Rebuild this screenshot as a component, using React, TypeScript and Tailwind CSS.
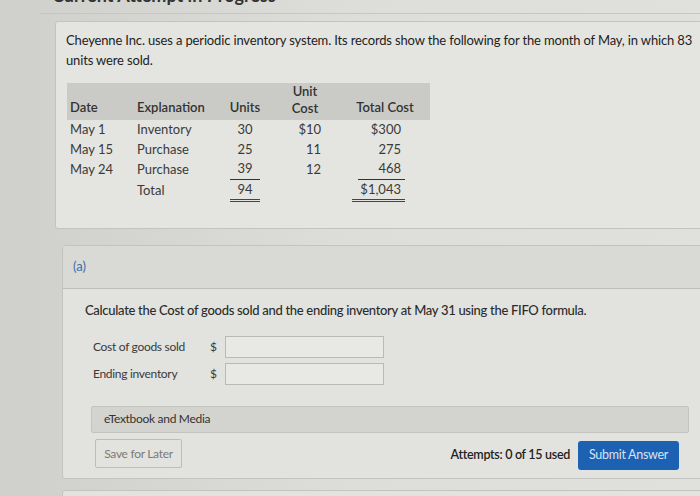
import React from 'react';

const rows = [
  { date: 'May 1', exp: 'Inventory', units: '30', cost: '$10', total: '$300' },
  { date: 'May 15', exp: 'Purchase', units: '25', cost: '11', total: '275' },
  { date: 'May 24', exp: 'Purchase', units: '39', cost: '12', total: '468' },
];

export default function App() {
  return (
    <div className="w-[700px] h-[496px] overflow-hidden bg-gradient-to-r from-[#cfd0cb] via-[#dddeda] to-[#e0e1dc] font-['Lato','Liberation_Sans',sans-serif] text-[#2b2b2b]">
      {/* cut-off page title */}
      <div className="ml-[40px] h-[14px] border-b border-[#c6c7c2] overflow-hidden relative">
        <div className="absolute left-[12px] top-[-18px] text-[18px] font-bold text-[#333]">Current Attempt in Progress</div>
      </div>

      {/* question box */}
      <div className="ml-[55px] mt-[7px] w-[700px] h-[208px] border border-[#c3c4bf] rounded-[3px] bg-[#e4e5e0] pl-[10px] pt-[8px]">
        <p className="text-[13px] leading-[20px] tracking-[-0.15px] w-[632px] text-[#222]">
          Cheyenne Inc. uses a periodic inventory system. Its records show the following for the month of May, in which 83 units were sold.
        </p>
        <table className="mt-[13px] ml-[1px] w-[363px] text-[13px] border-collapse">
          <thead>
            <tr className="bg-[#cacbc6] align-bottom font-semibold text-[#333]">
              <th className="w-[63px] text-left pl-[3px] pb-[3px] pt-[3px] font-semibold">Date</th>
              <th className="w-[90px] text-left pl-[7px] pb-[3px] font-semibold">Explanation</th>
              <th className="w-[50px] text-center pb-[3px] font-semibold">Units</th>
              <th className="w-[70px] text-center pb-[3px] font-semibold leading-[17px]">
                Unit
                <br />
                Cost
              </th>
              <th className="w-[90px] text-center pb-[3px] font-semibold">Total Cost</th>
            </tr>
          </thead>
          <tbody className="text-[#3a3a3a]">
            {rows.map((r, i) => (
              <tr key={r.date} className="h-[19.5px]">
                <td className="pl-[3px]">{r.date}</td>
                <td className="pl-[7px]">{r.exp}</td>
                <td className="text-center">
                  <span className={`inline-block px-[7px] ${i === 2 ? 'border-b-[1.5px] border-[#333]' : ''}`}>{r.units}</span>
                </td>
                <td className="text-right pr-[19px]">{r.cost}</td>
                <td className="text-right pr-[25px]">
                  <span className={`inline-block ${i === 2 ? 'border-b-[1.5px] border-[#333] pl-[20px] pr-[4px]' : 'pr-[4px]'}`}>{r.total}</span>
                </td>
              </tr>
            ))}
            <tr className="h-[20px]">
              <td />
              <td className="pl-[7px]">Total</td>
              <td className="text-center">
                <span className="inline-block px-[7px] border-b-[3px] border-double border-[#444]">94</span>
              </td>
              <td />
              <td className="text-right pr-[25px]">
                <span className="inline-block pl-[8px] pr-[4px] border-b-[3px] border-double border-[#444]">$1,043</span>
              </td>
            </tr>
          </tbody>
        </table>
      </div>

      {/* part (a) */}
      <div className="ml-[62px] mt-[16px] w-[700px] h-[234px] border border-[#c3c4bf] rounded-[3px] bg-[#e2e3de]">
        <div className="h-[43px] bg-[#d9dad5] border-b border-[#bfc0bb] flex items-center pl-[10px]">
          <span className="text-[13px] text-[#3b6fae]">(a)</span>
        </div>
        <div className="pl-[22px] pt-[12px]">
          <p className="text-[13px] tracking-[-0.3px] font-medium text-[#2b2b2b]">
            Calculate the Cost of goods sold and the ending inventory at May 31 using the FIFO formula.
          </p>
          <div className="mt-[15px] ml-[8px] flex flex-col gap-[5px] text-[12px] text-[#3a3a3a] tracking-[-0.3px]">
            <div className="flex items-center">
              <span className="w-[117px]">Cost of goods sold</span>
              <span className="w-[15px] text-[12px]">$</span>
              <div className="w-[159px] h-[22px] border border-[#b9bab5] bg-[#e8e9e4]" />
            </div>
            <div className="flex items-center">
              <span className="w-[117px]">Ending inventory</span>
              <span className="w-[15px] text-[12px]">$</span>
              <div className="w-[159px] h-[22px] border border-[#b9bab5] bg-[#e8e9e4]" />
            </div>
          </div>
          <div className="mt-[21px] ml-[6px] w-[598px] h-[27px] bg-[#d3d4cf] border border-[#c3c4bf] rounded-[2px] flex items-center pl-[12px] text-[12px] tracking-[-0.3px] text-[#333]">
            eTextbook and Media
          </div>
          <div className="mt-[5px] ml-[10px] w-[584px] flex items-center justify-between">
            <div className="h-[29px] w-[87px] border border-[#bdbeb9] rounded-[2px] flex items-center justify-center text-[12px] text-[#7a7a7a] tracking-[-0.3px]">
              Save for Later
            </div>
            <div className="flex items-center gap-[8px] pt-[3px]">
              <span className="text-[12.5px] font-semibold text-[#222] tracking-[-0.3px]">Attempts: 0 of 15 used</span>
              <div className="h-[29px] w-[101px] bg-[#1d61b3] rounded-[3px] flex items-center justify-center text-[12.5px] text-[#d8e3f2] tracking-[-0.3px]">
                Submit Answer
              </div>
            </div>
          </div>
        </div>
      </div>

      <div className="ml-[62px] mt-[11px] w-[700px] h-[40px] border border-[#c3c4bf] rounded-[3px] bg-[#e2e3de]" />
    </div>
  );
}
